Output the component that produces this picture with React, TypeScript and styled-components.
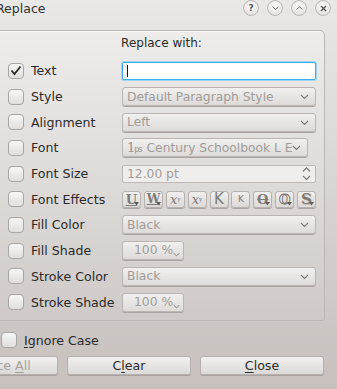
import React from "react";
import styled, { createGlobalStyle } from "styled-components";

const Global = createGlobalStyle`
  html, body { margin: 0; padding: 0; }
  body { font-family: "DejaVu Sans", "Liberation Sans", sans-serif; }
`;

const Window = styled.div`
  width: 337px;
  height: 389px;
  overflow: hidden;
  background: linear-gradient(180deg, #e9e8e7 0%, #d8d4d2 50%, #c7c0bd 100%);
  font-size: 12px;
  color: #2b2b2b;
`;

const TitleBar = styled.div`
  height: 20px;
  display: flex;
  align-items: center;
  padding-right: 6px;
`;

const Title = styled.div`
  margin-left: -4px;
  flex: 1;
  font-size: 12.5px;
  color: #333;
  padding-bottom: 4px;
`;

const TitleButtons = styled.div`
  display: flex;
  gap: 8px;
  padding-bottom: 4px;
`;

const RoundButton = styled.div`
  width: 14px;
  height: 14px;
  border-radius: 50%;
  border: 1px solid #bdb9b7;
  background: radial-gradient(circle at 50% 35%, #fcfcfc 0%, #e6e4e3 70%, #d6d3d2 100%);
  display: flex;
  align-items: center;
  justify-content: center;
  color: #555;
  font-size: 9px;
  font-weight: bold;
`;

const Panel = styled.div`
  margin-top: 10px;
  margin-left: -2px;
  width: 325px;
  height: 289px;
  border: 1px solid #bcb7b4;
  border-top-right-radius: 5px;
  border-bottom-right-radius: 3px;
  background: linear-gradient(180deg, #eeedec 0%, #dedbd9 50%, #cfcac7 100%);
  box-shadow: inset 1px 1px 0 #fafafa;
`;

const Header = styled.div`
  height: 24px;
  line-height: 24px;
  text-align: center;
  color: #2b2b2b;
`;

const Grid = styled.div`
  margin-top: 3px;
  padding-left: 9px;
  display: grid;
  grid-template-columns: 23px 91px 194px;
  grid-auto-rows: 25.7px;
  align-items: center;
`;

const Box = styled.div`
  width: 14px;
  height: 14px;
  border-radius: 4px;
  border: 1px solid #a9a5a2;
  background: linear-gradient(180deg, #f6f6f6 0%, #e1dfde 100%);
  display: flex;
  align-items: center;
  justify-content: center;
`;

const Label = styled.div`
  white-space: nowrap;
  font-size: 12.6px;
`;

const TextInput = styled.div`
  height: 16px;
  border: 1px solid #3daee9;
  box-shadow: 0 0 0 1px #9fd4f2;
  border-radius: 2px;
  background: #fff;
  display: flex;
  align-items: center;
  padding-left: 4px;
  box-sizing: content-box;
  width: 188px;
`;

const Caret = styled.div`
  width: 1px;
  height: 12px;
  background: #111;
`;

const Combo = styled.div<{ $w?: number }>`
  box-sizing: border-box;
  width: ${(p) => p.$w ?? 194}px;
  height: 19px;
  border: 1px solid #bab5b2;
  border-radius: 3px;
  background: linear-gradient(180deg, #f1f0ef 0%, #dedbd9 100%);
  box-shadow: 0 1px 0 #a9a4a1;
  display: flex;
  align-items: center;
  padding: 0 6px 0 4px;
  color: #a19d9a;
  font-size: 12.3px;
  white-space: nowrap;
  overflow: hidden;
`;

const ComboText = styled.span`
  flex: 1;
  overflow: hidden;
`;

const Spin = styled.div`
  box-sizing: border-box;
  width: 194px;
  height: 18px;
  border: 1px solid #bdb8b5;
  border-radius: 2px;
  background: #efeeed;
  display: flex;
  align-items: center;
  padding: 0 4px 0 4px;
  color: #a19d9a;
  font-size: 12.3px;
`;

const SpinArrows = styled.div`
  display: flex;
  flex-direction: column;
  gap: 2px;
`;

const Effects = styled.div`
  width: 194px;
  display: flex;
  justify-content: space-between;
`;

const EffectButton = styled.div<{ $sans?: boolean; $size?: number }>`
  position: relative;
  box-sizing: border-box;
  width: 19px;
  height: 17px;
  border: 1px solid #b7b2af;
  border-radius: 3px;
  background: linear-gradient(180deg, #f0efee 0%, #dcd9d7 100%);
  box-shadow: 0 1px 0 #aaa5a2;
  display: flex;
  align-items: center;
  justify-content: center;
  font-family: ${(p) => (p.$sans ? '"DejaVu Sans", sans-serif' : '"DejaVu Serif", serif')};
  color: #7f7b78;
  font-size: ${(p) => p.$size ?? 13}px;
  line-height: 1;
`;

const DropMark = styled.svg`
  position: absolute;
  right: 1px;
  bottom: 1px;
`;

const SmallCombo = styled.div`
  position: relative;
  box-sizing: border-box;
  width: 62px;
  height: 19px;
  border: 1px solid #bab5b2;
  border-radius: 3px;
  background: linear-gradient(180deg, #f1f0ef 0%, #dedbd9 100%);
  box-shadow: 0 1px 0 #a9a4a1;
  color: #a19d9a;
  font-size: 12.3px;
  padding-left: 11px;
  line-height: 17px;
`;

const FontIcon = styled.span`
  font-family: "DejaVu Serif", serif;
  color: #9a9693;
  font-size: 13px;
  margin-right: 5px;
  letter-spacing: -1px;
`;

const Sub = styled.span`
  font-size: 8px;
  font-family: "DejaVu Sans", sans-serif;
`;

const Footer = styled.div`
  margin-top: 11px;
  padding-left: 1px;
  display: flex;
  align-items: center;
  gap: 7px;
  height: 16px;
`;

const ButtonRow = styled.div`
  margin-top: 8px;
  margin-left: -66px;
  display: flex;
  gap: 9px;
`;

const PushButton = styled.div<{ $disabled?: boolean }>`
  box-sizing: border-box;
  width: 124px;
  height: 19px;
  border: 1px solid #b5b0ad;
  border-radius: 3px;
  background: linear-gradient(180deg, #f2f1f0 0%, #dcd9d7 100%);
  box-shadow: 0 1px 0 #a7a29f;
  display: flex;
  align-items: center;
  justify-content: center;
  font-size: 12.6px;
  color: ${(p) => (p.$disabled ? "#a5a19e" : "#2b2b2b")};
`;

const U = styled.span`
  text-decoration: underline;
  text-underline-offset: 2px;
`;

const Chevron = ({ up = false, size = 9, color = "#7b7774" }: { up?: boolean; size?: number; color?: string }) => (
  <svg width={size} height={size * 0.6} viewBox="0 0 10 6">
    <path
      d={up ? "M1 5 L5 1 L9 5" : "M1 1 L5 5 L9 1"}
      fill="none"
      stroke={color}
      strokeWidth="1.3"
    />
  </svg>
);

const Check = () => (
  <svg width="12" height="11" viewBox="0 0 12 11">
    <path d="M1.5 5.5 L4.5 9 L10.5 1.5" fill="none" stroke="#2a2a2a" strokeWidth="1.8" />
  </svg>
);

const Drop = () => (
  <DropMark width="5" height="4" viewBox="0 0 5 4">
    <path d="M0 0 L5 0 L2.5 3.5 Z" fill="#5f5b58" />
  </DropMark>
);

const SmallDrop = () => (
  <DropMark width="7" height="5" viewBox="0 0 10 6" style={{ right: 3, bottom: 2 }}>
    <path d="M1 1 L5 5 L9 1" fill="none" stroke="#7b7774" strokeWidth="1.4" />
  </DropMark>
);

const rows: { label: string; checked?: boolean; control: React.ReactNode }[] = [
  {
    label: "Text",
    checked: true,
    control: (
      <TextInput>
        <Caret />
      </TextInput>
    ),
  },
  {
    label: "Style",
    control: (
      <Combo>
        <ComboText>Default Paragraph Style</ComboText>
        <Chevron />
      </Combo>
    ),
  },
  {
    label: "Alignment",
    control: (
      <Combo>
        <ComboText>Left</ComboText>
        <Chevron />
      </Combo>
    ),
  },
  {
    label: "Font",
    control: (
      <Combo $w={186}>
        <FontIcon>
          1<Sub>ps</Sub>
        </FontIcon>
        <ComboText>Century Schoolbook L E</ComboText>
        <Chevron />
      </Combo>
    ),
  },
  {
    label: "Font Size",
    control: (
      <Spin>
        <ComboText>12.00 pt</ComboText>
        <SpinArrows>
          <Chevron up size={9} />
          <Chevron size={9} />
        </SpinArrows>
      </Spin>
    ),
  },
  {
    label: "Font Effects",
    control: (
      <Effects>
        <EffectButton>
          <span style={{ textDecoration: "underline", fontWeight: "bold" }}>U</span>
          <Drop />
        </EffectButton>
        <EffectButton $size={12}>
          <span style={{ textDecoration: "underline", fontWeight: "bold" }}>W</span>
          <Drop />
        </EffectButton>
        <EffectButton>
          <i>x</i>
          <sub style={{ fontSize: 6 }}>y</sub>
        </EffectButton>
        <EffectButton>
          <i>x</i>
          <sup style={{ fontSize: 6 }}>y</sup>
        </EffectButton>
        <EffectButton $sans $size={15}>K</EffectButton>
        <EffectButton $sans $size={9}>K</EffectButton>
        <EffectButton>
          <span style={{ textDecoration: "line-through", fontWeight: "bold" }}>O</span>
          <Drop />
        </EffectButton>
        <EffectButton>
          <span style={{ WebkitTextStroke: "1px #7f7b78", color: "#f0efee", fontWeight: "bold" }}>O</span>
          <Drop />
        </EffectButton>
        <EffectButton $size={15}>
          <span style={{ fontWeight: "bold", textShadow: "1px 1px 0 #bdb9b6" }}>S</span>
          <Drop />
        </EffectButton>
      </Effects>
    ),
  },
  {
    label: "Fill Color",
    control: (
      <Combo>
        <ComboText>Black</ComboText>
        <Chevron />
      </Combo>
    ),
  },
  {
    label: "Fill Shade",
    control: (
      <SmallCombo>
        100 %
        <SmallDrop />
      </SmallCombo>
    ),
  },
  {
    label: "Stroke Color",
    control: (
      <Combo>
        <ComboText>Black</ComboText>
        <Chevron />
      </Combo>
    ),
  },
  {
    label: "Stroke Shade",
    control: (
      <SmallCombo>
        100 %
        <SmallDrop />
      </SmallCombo>
    ),
  },
];

export default function App() {
  return (
    <>
      <Global />
      <Window>
        <TitleBar>
          <Title>Replace</Title>
          <TitleButtons>
            <RoundButton>?</RoundButton>
            <RoundButton>
              <Chevron size={7} color="#555" />
            </RoundButton>
            <RoundButton>
              <Chevron up size={7} color="#555" />
            </RoundButton>
            <RoundButton>
              <svg width="7" height="7" viewBox="0 0 7 7">
                <path d="M1 1 L6 6 M6 1 L1 6" stroke="#555" strokeWidth="1.4" />
              </svg>
            </RoundButton>
          </TitleButtons>
        </TitleBar>
        <Panel>
          <Header>Replace with:</Header>
          <Grid>
            {rows.map((r) => (
              <React.Fragment key={r.label}>
                <Box>{r.checked && <Check />}</Box>
                <Label>{r.label}</Label>
                <div>{r.control}</div>
              </React.Fragment>
            ))}
          </Grid>
        </Panel>
        <Footer>
          <Box />
          <Label>
            <U>I</U>gnore Case
          </Label>
        </Footer>
        <ButtonRow>
          <PushButton $disabled>
            Replace&nbsp;<U>A</U>ll
          </PushButton>
          <PushButton>
            C<U>l</U>ear
          </PushButton>
          <PushButton>
            <U>C</U>lose
          </PushButton>
        </ButtonRow>
      </Window>
    </>
  );
}
